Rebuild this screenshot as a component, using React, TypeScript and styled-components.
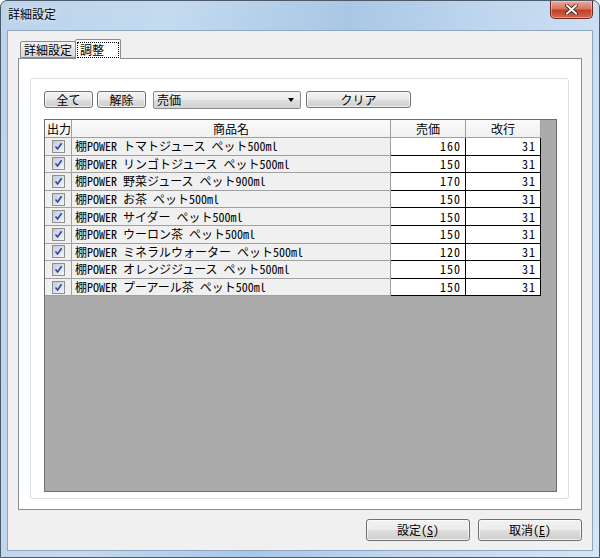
import React, { FC } from "react";
import styled, { createGlobalStyle } from "styled-components";

const GlobalStyle = createGlobalStyle`
  html, body {
    margin: 0;
    padding: 0;
    background: #ffffff;
  }
  body {
    font-family: "Noto Sans CJK JP", "Liberation Sans", sans-serif;
    font-size: 12px;
    color: #000;
  }
`;

interface Item {
  name: string;
  price: number;
  breakAt: number;
}

const items: Item[] = [
  { name: "棚POWER　トマトジュース　ペット500ml", price: 160, breakAt: 31 },
  { name: "棚POWER　リンゴトジュース　ペット500ml", price: 150, breakAt: 31 },
  { name: "棚POWER　野菜ジュース　ペット900ml", price: 170, breakAt: 31 },
  { name: "棚POWER　お茶　ペット500ml", price: 150, breakAt: 31 },
  { name: "棚POWER　サイダー　ペット500ml", price: 150, breakAt: 31 },
  { name: "棚POWER　ウーロン茶　ペット500ml", price: 150, breakAt: 31 },
  { name: "棚POWER　ミネラルウォーター　ペット500ml", price: 120, breakAt: 31 },
  { name: "棚POWER　オレンジジュース　ペット500ml", price: 150, breakAt: 31 },
  { name: "棚POWER　プーアール茶　ペット500ml", price: 150, breakAt: 31 },
];

const Window = styled.div`
  width: 600px;
  height: 558px;
  box-sizing: border-box;
  display: flex;
  flex-direction: column;
  border: 1px solid #4c5a6a;
  border-radius: 7px 7px 0 0;
  background: linear-gradient(
    100deg,
    #bcd3ea 0%,
    #c4daef 25%,
    #a9c7e5 50%,
    #bfd6ee 70%,
    #d5e5f5 100%
  );
  overflow: hidden;
`;

const TitleBar = styled.div`
  height: 29px;
  display: flex;
  align-items: flex-start;
  justify-content: space-between;
  padding-left: 7px;
`;

const Title = styled.div`
  padding-top: 4px;
  font-size: 12px;
  color: #000;
  text-shadow: 0 0 6px rgba(255, 255, 255, 0.9);
`;

const CloseButton = styled.div`
  width: 43px;
  height: 18px;
  margin-right: 6px;
  box-sizing: border-box;
  border: 1px solid #6b2a20;
  border-top: none;
  border-radius: 0 0 5px 5px;
  background: linear-gradient(#e9a99c 0%, #d8765f 45%, #c23f25 55%, #d46a50 100%);
  box-shadow: inset 0 0 0 1px rgba(255, 255, 255, 0.35);
  display: flex;
  align-items: center;
  justify-content: center;
`;

const Client = styled.div`
  flex: 1;
  margin: 0 6px 6px 6px;
  border: 1px solid #8ea6bf;
  background: #f0f0f0;
  display: flex;
  flex-direction: column;
  padding: 9px 10px 9px 10px;
  box-sizing: border-box;
`;

const TabStrip = styled.div`
  height: 19px;
  display: flex;
  align-items: flex-end;
  padding-left: 2px;
  margin-bottom: -1px;
  position: relative;
  z-index: 1;
`;

const Tab = styled.div<{ $active?: boolean }>`
  box-sizing: border-box;
  height: ${(p) => (p.$active ? "20px" : "17px")};
  margin-bottom: ${(p) => (p.$active ? "0" : "1px")};
  padding: 0 ${(p) => (p.$active ? "2px" : "3px")};
  border: 1px solid #898c95;
  border-bottom: ${(p) => (p.$active ? "none" : "1px solid #898c95")};
  border-radius: 2px 2px 0 0;
  background: ${(p) =>
    p.$active ? "#ffffff" : "linear-gradient(#f2f2f2, #e4e4e4 50%, #d8d8d8)"};
  margin-right: ${(p) => (p.$active ? "0" : "-1px")};
  display: flex;
  align-items: center;
  line-height: 14px;
`;

const FocusLabel = styled.span`
  outline: 1px dotted #000;
  outline-offset: 0;
  padding: 0 14px 0 2px;
`;

const TabPage = styled.div`
  flex: 1;
  border: 1px solid #898c95;
  background: #ffffff;
  padding: 19px 12px 10px 11px;
  display: flex;
  flex-direction: column;
`;

const Group = styled.div`
  flex: 1;
  border: 1px solid #d5dfe5;
  border-radius: 3px;
  padding: 12px 11px 6px 13px;
  display: flex;
  flex-direction: column;
`;

const Toolbar = styled.div`
  display: flex;
  align-items: center;
  height: 17px;
  margin-bottom: 11px;
`;

const Button = styled.button<{ $w: number; $gap?: number }>`
  width: ${(p) => p.$w}px;
  height: 17px;
  margin-right: ${(p) => p.$gap ?? 0}px;
  padding: 0;
  box-sizing: border-box;
  border: 1px solid #707070;
  border-radius: 3px;
  background: linear-gradient(#f2f2f2 0%, #ebebeb 48%, #dddddd 52%, #cfcfcf 100%);
  box-shadow: inset 0 0 0 1px rgba(255, 255, 255, 0.7);
  font-family: inherit;
  font-size: 12px;
  line-height: 14px;
  color: #000;
  font-feature-settings: "hwid";
`;

const Combo = styled.div`
  width: 148px;
  height: 18px;
  margin-right: 5px;
  box-sizing: border-box;
  border: 1px solid #8a8a8a;
  border-radius: 2px;
  background: linear-gradient(#f2f2f2, #ebebeb 48%, #dddddd 52%, #d3d3d3);
  display: flex;
  align-items: center;
  padding: 0 6px 0 3px;
  justify-content: space-between;
`;

const ComboText = styled.span`
  line-height: 14px;
`;

const Arrow = styled.span`
  width: 0;
  height: 0;
  border-left: 3.5px solid transparent;
  border-right: 3.5px solid transparent;
  border-top: 4px solid #000;
`;

const GridBox = styled.div`
  flex: 1;
  border: 1px solid #6d6d6d;
  background: #ababab;
  overflow: hidden;
`;

const Table = styled.div`
  display: grid;
  grid-template-columns: 27px 319px 75px 75px;
  grid-auto-rows: 17.6px;
  grid-template-rows: 18px;
  width: 496px;
`;

const HeadCell = styled.div`
  background: linear-gradient(#fbfbfb, #f0f0f0);
  border-right: 1px solid #a0a0a0;
  border-bottom: 1px solid #a0a0a0;
  display: flex;
  align-items: center;
  justify-content: center;
  line-height: 14px;
  &:first-child {
    justify-content: flex-start;
    padding-left: 2px;
  }
`;

const CheckCell = styled.div`
  background: #f0f0f0;
  border-right: 1px solid #a0a0a0;
  border-bottom: 1px solid #a0a0a0;
  display: flex;
  align-items: center;
  justify-content: center;
`;

const NameCell = styled.div`
  background: #f0f0f0;
  border-right: 1px solid #a0a0a0;
  border-bottom: 1px solid #a0a0a0;
  display: flex;
  align-items: center;
  padding-left: 3px;
  white-space: nowrap;
  overflow: hidden;
  line-height: 14px;
  font-feature-settings: "hwid";
`;

const ValueCell = styled.div`
  background: #ffffff;
  border-right: 1px solid #000;
  border-bottom: 1px solid #000;
  display: flex;
  align-items: center;
  justify-content: flex-end;
  padding-right: 4px;
  line-height: 14px;
  font-feature-settings: "hwid";
  letter-spacing: 1px;
`;

const CheckBox = styled.div`
  width: 13px;
  height: 13px;
  box-sizing: border-box;
  border: 1px solid #8e8f8f;
  background: linear-gradient(135deg, #c3cad6, #f4f6f9);
  display: flex;
  align-items: center;
  justify-content: center;
`;

const Footer = styled.div`
  display: flex;
  justify-content: flex-end;
  gap: 8px;
  margin-top: 9px;
`;

const FooterButton = styled(Button)`
  height: 22px;
`;

const Mnemonic = styled.span`
  text-decoration: underline;
`;

const Check: FC = () => (
  <CheckBox>
    <svg width="9" height="9" viewBox="0 0 9 9">
      <path d="M1.5 4.5 L3.6 7 L7.6 1.3" fill="none" stroke="#2a46a8" strokeWidth="1.6" />
    </svg>
  </CheckBox>
);

const App: FC = () => (
  <>
    <GlobalStyle />
    <Window>
      <TitleBar>
        <Title>詳細設定</Title>
        <CloseButton>
          <svg width="13" height="11" viewBox="0 0 13 11">
            <path
              d="M2 1.5 L11 9.5 M11 1.5 L2 9.5"
              stroke="#3a1810"
              strokeWidth="3.6"
              strokeLinecap="square"
            />
            <path
              d="M2 1.5 L11 9.5 M11 1.5 L2 9.5"
              stroke="#ffffff"
              strokeWidth="2"
              strokeLinecap="square"
            />
          </svg>
        </CloseButton>
      </TitleBar>
      <Client>
        <TabStrip>
          <Tab>詳細設定</Tab>
          <Tab $active>
            <FocusLabel>調整</FocusLabel>
          </Tab>
        </TabStrip>
        <TabPage>
          <Group>
            <Toolbar>
              <Button $w={49} $gap={4}>全て</Button>
              <Button $w={49} $gap={7}>解除</Button>
              <Combo>
                <ComboText>売価</ComboText>
                <Arrow />
              </Combo>
              <Button $w={105}>クリア</Button>
            </Toolbar>
            <GridBox>
              <Table>
                <HeadCell>出力</HeadCell>
                <HeadCell>商品名</HeadCell>
                <HeadCell>売価</HeadCell>
                <HeadCell>改行</HeadCell>
                {items.map((it) => (
                  <React.Fragment key={it.name}>
                    <CheckCell>
                      <Check />
                    </CheckCell>
                    <NameCell>{it.name}</NameCell>
                    <ValueCell>{it.price}</ValueCell>
                    <ValueCell>{it.breakAt}</ValueCell>
                  </React.Fragment>
                ))}
              </Table>
            </GridBox>
          </Group>
        </TabPage>
        <Footer>
          <FooterButton $w={104}>
            設定(<Mnemonic>S</Mnemonic>)
          </FooterButton>
          <FooterButton $w={104}>
            取消(<Mnemonic>E</Mnemonic>)
          </FooterButton>
        </Footer>
      </Client>
    </Window>
  </>
);

export default App;
